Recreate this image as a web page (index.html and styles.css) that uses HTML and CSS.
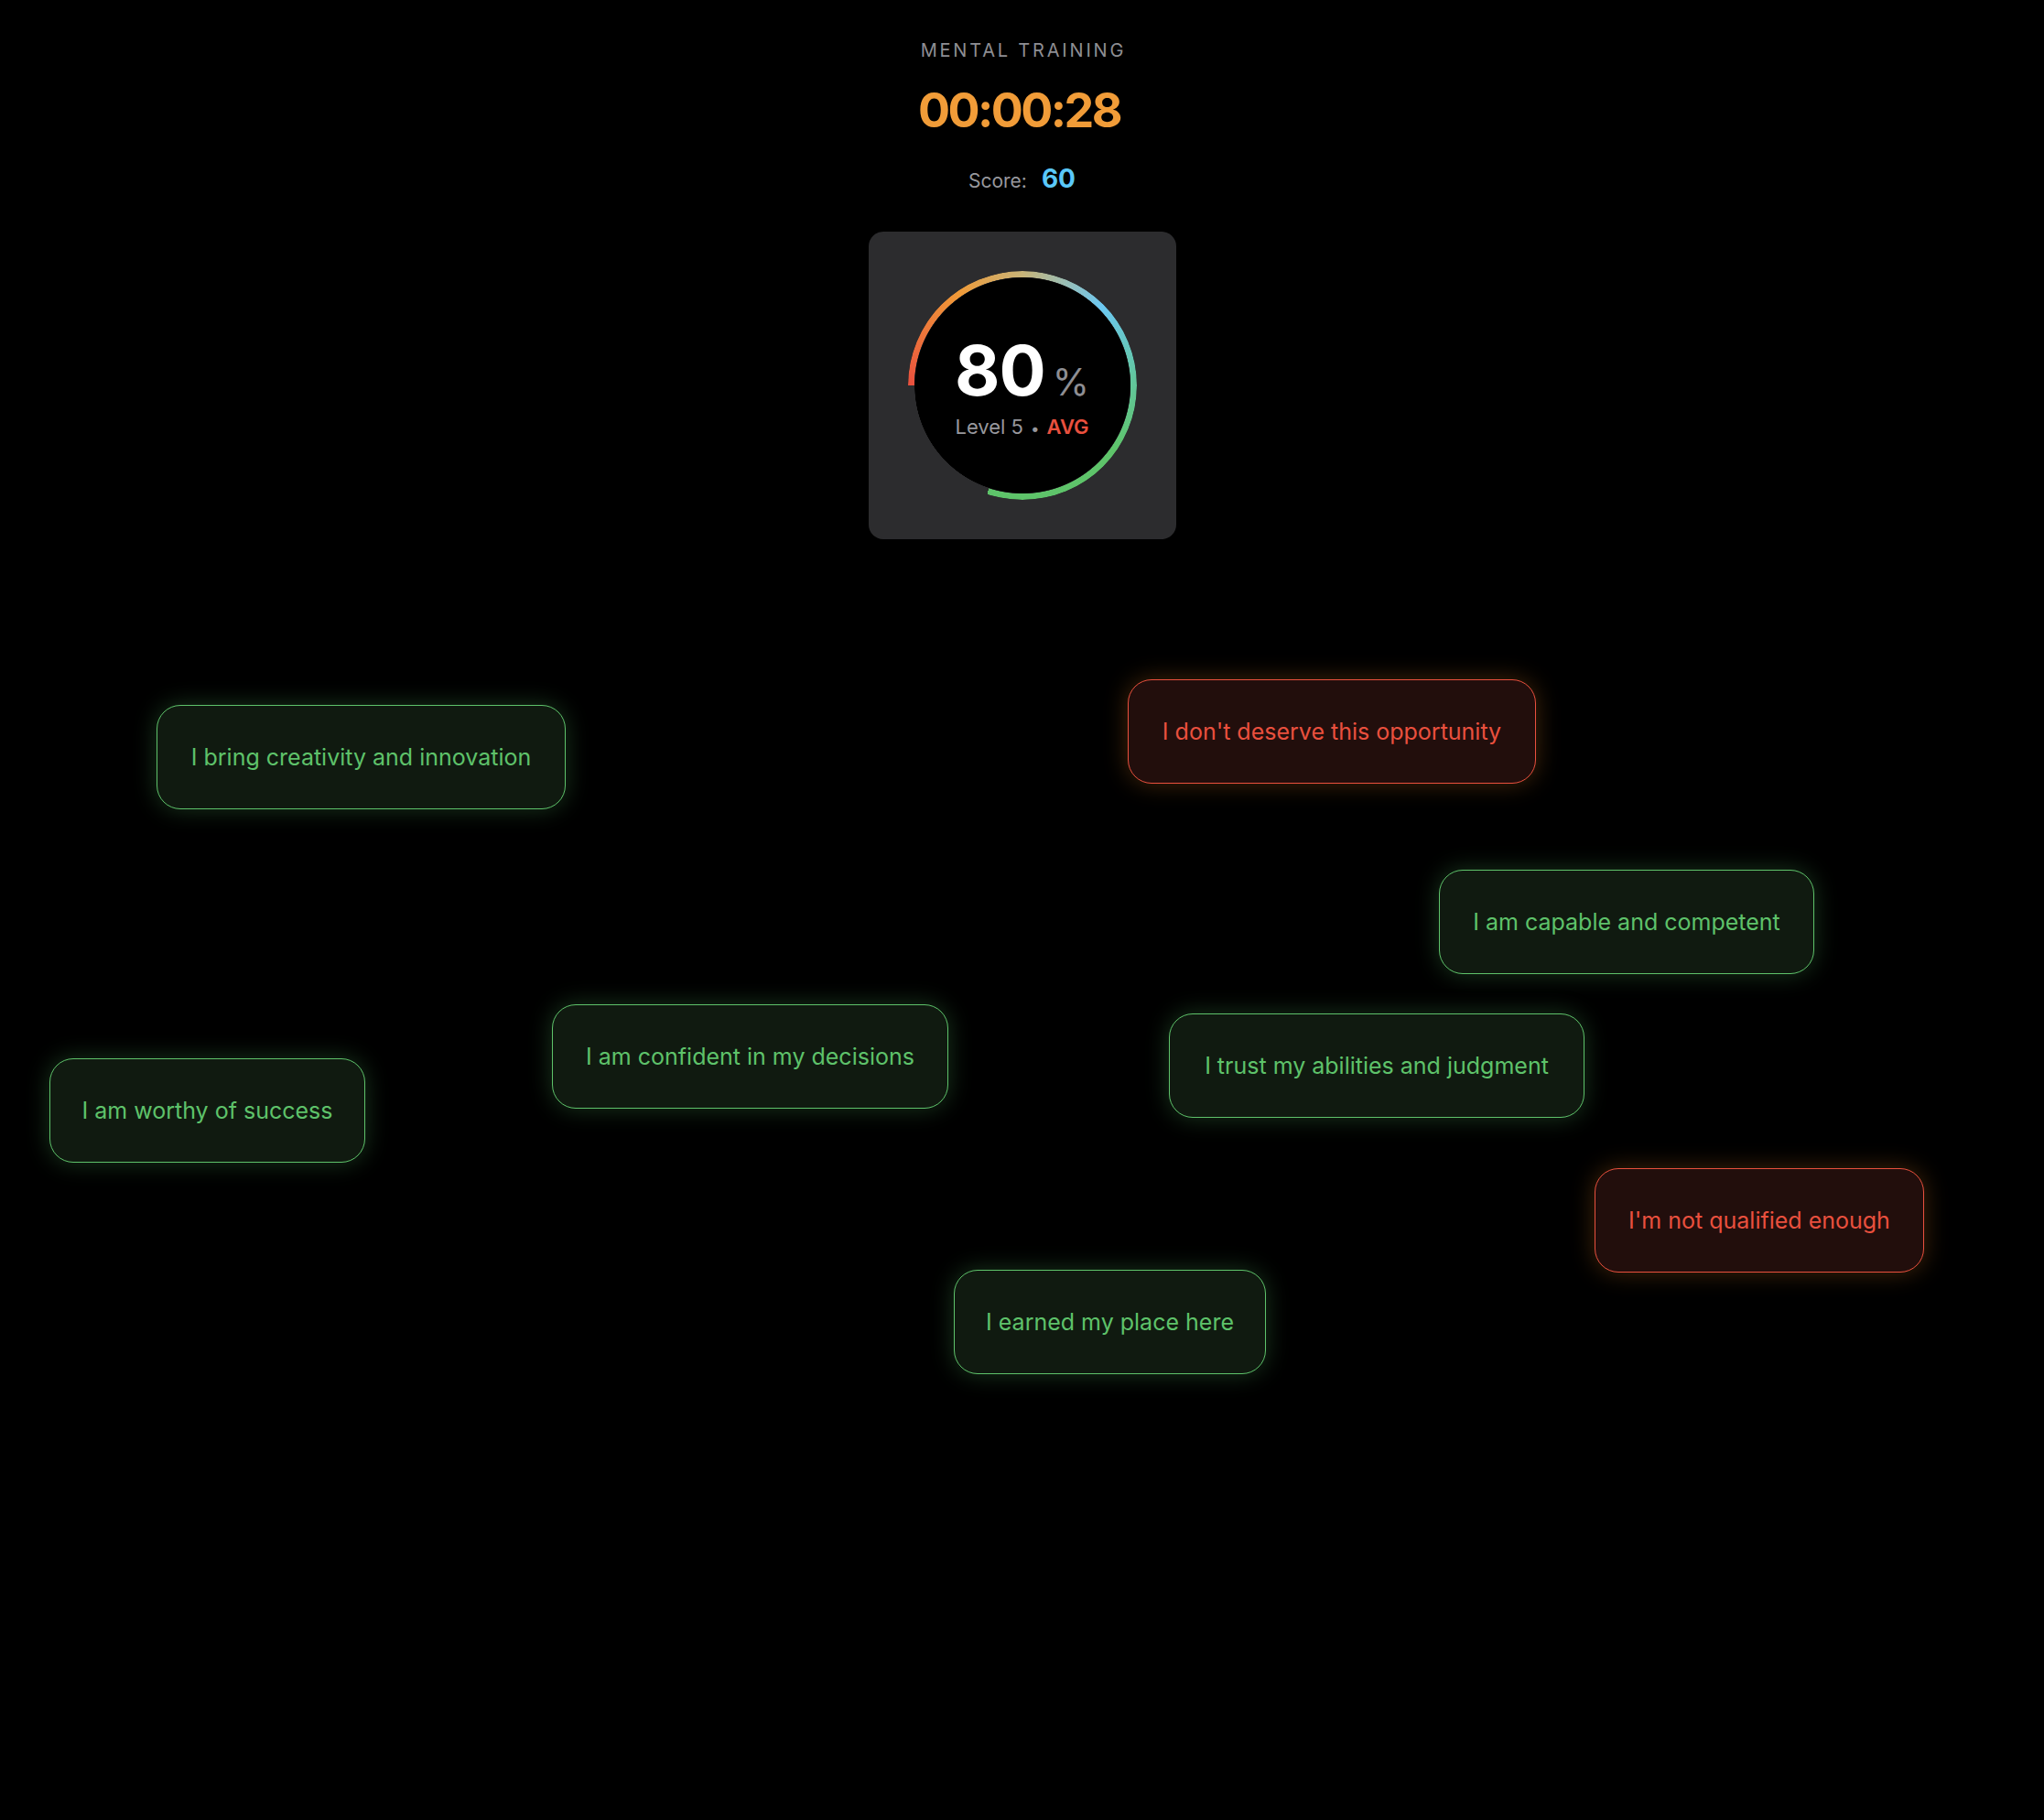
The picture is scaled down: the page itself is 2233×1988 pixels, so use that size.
FILE: index.html
```html
<!DOCTYPE html>
<html lang="en">
<head>
<meta charset="utf-8">
<title>Mental Training</title>
<link rel="stylesheet" href="styles.css">
</head>
<body>
<main class="screen">
  <header class="top">
    <div class="eyebrow">MENTAL TRAINING</div>
    <div class="timer">00:00:28</div>
    <div class="score"><span class="score-label">Score:</span><span class="score-value">60</span></div>
    <section class="card">
      <div class="dial">
        <div class="dial-value"><span class="pct-num">80</span><span class="pct-sign">%</span></div>
        <div class="dial-meta"><span class="lvl">Level 5</span><span class="dot">•</span><span class="avg">AVG</span></div>
      </div>
    </section>
  </header>
  <section class="field">
    <div class="chip good c1">I bring creativity and innovation</div>
    <div class="chip bad c2">I don't deserve this opportunity</div>
    <div class="chip good c3">I am capable and competent</div>
    <div class="chip good c4">I am confident in my decisions</div>
    <div class="chip good c5">I trust my abilities and judgment</div>
    <div class="chip good c6">I am worthy of success</div>
    <div class="chip bad c7">I'm not qualified enough</div>
    <div class="chip good c8">I earned my place here</div>
  </section>
</main>
</body>
</html>
```
FILE: styles.css
```css
* { box-sizing: border-box; }
html, body {
  margin: 0;
  background: #000;
}
body {
  font-family: "Inter", "Noto Sans", "Liberation Sans", sans-serif;
  color: #fff;
  min-height: 100vh;
}
.screen {
  position: relative;
  min-height: 1988px;
}
.top {
  display: flex;
  flex-direction: column;
  align-items: center;
  padding-top: 43px;
}
.eyebrow {
  font-size: 20px;
  line-height: 24px;
  letter-spacing: 2.8px;
  padding-left: 2.8px;
  color: #8e8e93;
}
.timer {
  margin-top: 28px;
  font-size: 52px;
  line-height: 52px;
  font-weight: 700;
  letter-spacing: -2.6px;
  padding-right: 6px;
  color: #f19c38;
}
.score {
  margin-top: 31px;
  display: flex;
  align-items: baseline;
  gap: 16px;
  line-height: 34px;
}
.score-label {
  font-size: 21px;
  color: #98989d;
}
.score-value {
  font-size: 28px;
  font-weight: 700;
  color: #5ac8fa;
}
.card {
  margin-top: 38px;
  width: 336px;
  height: 336px;
  border-radius: 16px;
  background: #2c2c2e;
  display: flex;
  align-items: center;
  justify-content: center;
}
.dial {
  position: relative;
  width: 250px;
  height: 250px;
  border-radius: 50%;
  background: radial-gradient(circle at center, #000 117.5px, transparent 118px);
  display: flex;
  flex-direction: column;
  align-items: center;
  justify-content: center;
  padding-top: 4px;
}
.dial::before {
  content: "";
  position: absolute;
  inset: 0;
  border-radius: 50%;
  background: conic-gradient(from 270deg,
    #e9503e 0deg,
    #f09a37 55deg,
    #c8b478 90deg,
    #6cc8f2 135deg,
    #62c6a0 175deg,
    #5ec46a 215deg,
    #5ec46a 288deg,
    transparent 288deg);
  -webkit-mask: radial-gradient(farthest-side, transparent calc(100% - 7px), #000 calc(100% - 6.5px));
  mask: radial-gradient(farthest-side, transparent calc(100% - 7px), #000 calc(100% - 6.5px));
}
.dial-value {
  display: flex;
  align-items: baseline;
  gap: 8px;
  line-height: 1;
}
.pct-num {
  font-size: 76px;
  font-weight: 700;
  color: #fff;
  letter-spacing: -1px;
}
.pct-sign {
  font-size: 41px;
  color: #8e8e93;
}
.dial-meta {
  margin-top: 11px;
  display: flex;
  align-items: baseline;
  gap: 8px;
  font-size: 22px;
  line-height: 26px;
}
.lvl { color: #98989d; }
.dot { color: #98989d; font-size: 17px; }
.avg { color: #e9503e; font-weight: 600; }

.field {
  position: absolute;
  inset: 0;
}
.chip {
  position: absolute;
  height: 114px;
  display: flex;
  align-items: center;
  justify-content: center;
  border-radius: 26px;
  border: 1.5px solid;
  font-size: 25px;
  white-space: nowrap;
}
.good {
  color: #5ec26a;
  border-color: #5ec26a;
  background: #101a10;
  box-shadow: 0 0 26px rgba(94, 194, 106, 0.28);
}
.bad {
  color: #e9503e;
  border-color: #e9503e;
  background: #220e0c;
  box-shadow: 0 0 26px rgba(240, 140, 40, 0.28);
}
.c1 { left: 171px; top: 770px; width: 447px; }
.c2 { left: 1232px; top: 742px; width: 446px; }
.c3 { left: 1572px; top: 950px; width: 410px; }
.c4 { left: 603px; top: 1097px; width: 433px; }
.c5 { left: 1277px; top: 1107px; width: 454px; }
.c6 { left: 54px; top: 1156px; width: 345px; }
.c7 { left: 1742px; top: 1276px; width: 360px; }
.c8 { left: 1042px; top: 1387px; width: 341px; }
```
